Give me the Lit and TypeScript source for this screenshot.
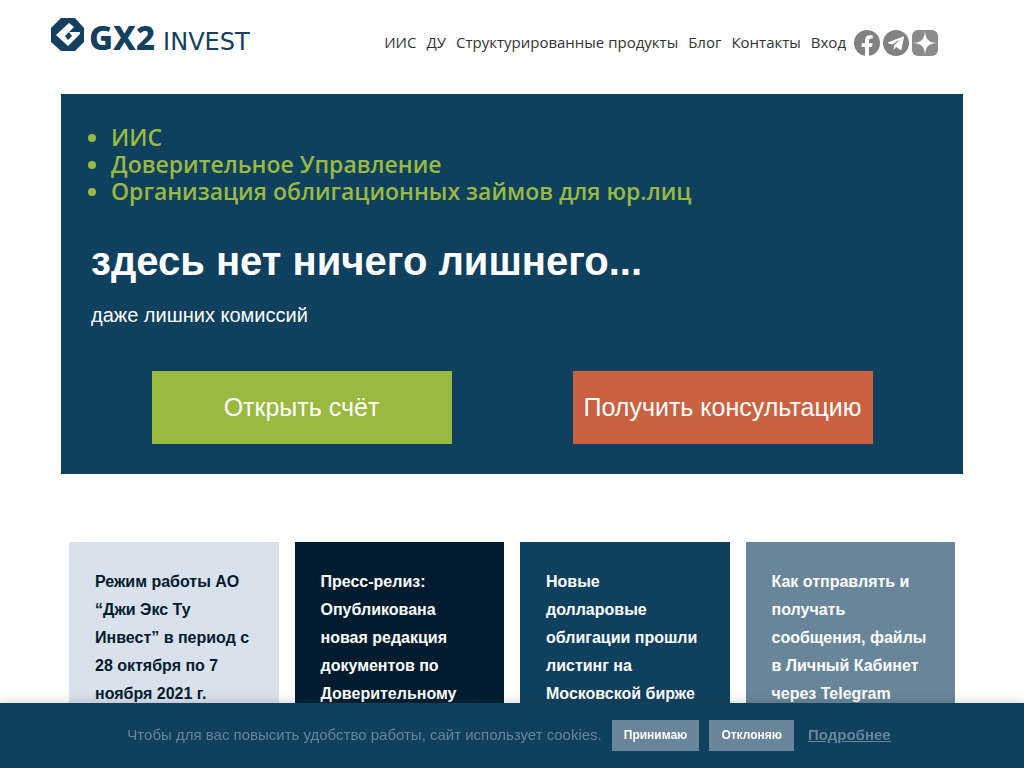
import { LitElement, html, css } from "lit";
import { customElement } from "lit/decorators.js";

const NAV = ["ИИС", "ДУ", "Структурированные продукты", "Блог", "Контакты", "Вход"];

const NEWS = [
  { tone: "light", title: "Режим работы АО “Джи Экс Ту Инвест” в период с 28 октября по 7 ноября 2021 г." },
  { tone: "dark", title: "Пресс-релиз: Опубликована новая редакция документов по Доверительному" },
  { tone: "navy", title: "Новые долларовые облигации прошли листинг на Московской бирже" },
  { tone: "slate", title: "Как отправлять и получать сообщения, файлы в Личный Кабинет через Telegram" },
];

@customElement("app-root")
export class AppRoot extends LitElement {
  static styles = css`
    :host {
      display: block;
      background: #fff;
      font-family: "Liberation Sans", Arial, sans-serif;
      color: #fff;
    }
    * { box-sizing: border-box; }
    a { color: inherit; text-decoration: none; }
    .header {
      display: flex;
      justify-content: space-between;
      align-items: flex-start;
      padding: 18px 86px 0 51px;
      height: 94px;
    }
    .logo { display: flex; color: #14405f; }
    .mark { width: 34px; height: 34px; display: block; }
    .word {
      display: flex;
      align-items: baseline;
      gap: 8px;
      padding-left: 4px;
      line-height: 40px;
    }
    .gx { font: 800 33px/40px "Noto Sans", "Open Sans", sans-serif; }
    .invest { font: 24px/40px "DejaVu Sans", Verdana, sans-serif; }
    .nav {
      display: flex;
      align-items: center;
      gap: 10px;
      padding-top: 12px;
      font: 15px/24px "Open Sans", "Noto Sans", sans-serif;
      color: #333;
      white-space: nowrap;
    }
    .nav > a { padding-bottom: 2px; }
    .social { display: flex; gap: 3px; margin-left: -2px; }
    .social a, .social svg { display: block; width: 26px; height: 26px; }
    .hero {
      margin: 0 61px;
      padding: 30px;
      background: #0f405e;
    }
    .services {
      margin: 0;
      padding-left: 20px;
      font: 600 23px/27px "Open Sans", "Noto Sans", sans-serif;
      color: #9ab941;
    }
    .headline {
      margin: 32px 0 0;
      font-size: 40px;
      line-height: 48px;
    }
    .sub { margin: 18px 0 0; font-size: 20px; line-height: 24px; }
    .actions {
      display: grid;
      grid-template-columns: 1fr 1fr;
      justify-items: center;
      margin-top: 44px;
    }
    .cta {
      width: 300px;
      padding: 22px 0;
      font-size: 25px;
      line-height: 29px;
      text-align: center;
      white-space: nowrap;
    }
    .open { background: #9ab941; }
    .consult { background: #ca6242; }
    .news {
      display: grid;
      grid-template-columns: repeat(4, 1fr);
      gap: 16px;
      margin: 68px 69px 0;
    }
    .card { padding: 26px 26px 80px; }
    .card h3 { margin: 0; font-size: 16px; line-height: 28px; }
    .light { background: #d9e1ec; color: #001c2e; }
    .dark { background: #001c2e; }
    .navy { background: #0f405e; }
    .slate { background: #688599; }
    .cookies {
      position: fixed;
      left: 0;
      right: 0;
      bottom: 0;
      display: flex;
      justify-content: center;
      align-items: center;
      gap: 10px;
      padding: 17px 10px 17px 4px;
      background: #0f405e;
      box-shadow: 0 0 10px rgba(50, 50, 50, 0.25);
      color: #688599;
      font-size: 15px;
      line-height: 29px;
    }
    .cookies span, .cookies a { padding-bottom: 2px; }
    .cookies button {
      border: 0;
      padding: 0 12px;
      background: #688599;
      color: #fff;
      font: bold 12px/31px "Liberation Sans", Arial, sans-serif;
    }
    .more { margin-left: 4px; font-weight: bold; text-decoration: underline; }
  `;

  render() {
    return html`
      <header class="header">
        <a class="logo" href="#" aria-label="GX2 Invest">
          <svg class="mark" viewBox="0 0 34 34">
            <path fill="#14405f" d="M10 0H24L33 10V24L24 33H10L0 24V10Z" />
            <path fill="#fff" d="M18 5L23 9L14 18L17 22L21 18L18 14H29V16L17 28L5 17Z" />
          </svg>
          <span class="word"><span class="gx">GX2</span><span class="invest">INVEST</span></span>
        </a>
        <nav class="nav">
          ${NAV.map((item) => html`<a href="#">${item}</a>`)}
          <div class="social">
            <a href="#" aria-label="Facebook">
              <svg viewBox="0 0 26 26">
                <circle cx="13" cy="13" r="13" fill="#818181" />
                <path fill="#fff" d="M11 26V17H7.700V13.200H11V10.300C11 7 12.900 5.200 15.900 5.200C17.300 5.200 18.700 5.400 18.700 5.400V8.600H17.100C15.500 8.600 15 9.600 15 10.600V13.200H18.600L18 17H15V26Z" />
              </svg>
            </a>
            <a href="#" aria-label="Telegram">
              <svg viewBox="0 0 26 26">
                <circle cx="13" cy="13" r="13" fill="#818181" />
                <path fill="#fff" d="M20 6.500L5.500 12.300C4.700 12.700 4.800 13.200 5.500 13.400L9.200 14.600L17.600 9.300L10.900 15.500L10.600 19.400C11.100 19.400 11.300 19.200 11.600 18.900L13.400 17.100L17.100 19.900C17.800 20.200 18.300 20 18.500 19.200L20.900 7.500C21.100 6.600 20.600 6.200 20 6.500Z" />
              </svg>
            </a>
            <a href="#" aria-label="Дзен">
              <svg viewBox="0 0 26 26">
                <rect width="26" height="26" rx="6" fill="#8b8b8b" />
                <path fill="#fff" d="M13 0C13.300 9.500 16.500 12.700 26 13C16.500 13.300 13.300 16.500 13 26C12.700 16.500 9.500 13.300 0 13C9.500 12.700 12.700 9.500 13 0Z" />
              </svg>
            </a>
          </div>
        </nav>
      </header>
      <main>
        <section class="hero">
          <ul class="services">
            <li>ИИС</li>
            <li>Доверительное Управление</li>
            <li>Организация облигационных займов для юр.лиц</li>
          </ul>
          <h1 class="headline">здесь нет ничего лишнего...</h1>
          <p class="sub">даже лишних комиссий</p>
          <div class="actions">
            <a class="cta open" href="#">Открыть счёт</a>
            <a class="cta consult" href="#">Получить консультацию</a>
          </div>
        </section>
        <section class="news">
          ${NEWS.map((n) => html`<article class="card ${n.tone}"><h3>${n.title}</h3></article>`)}
        </section>
      </main>
      <div class="cookies">
        <span>Чтобы для вас повысить удобство работы, сайт использует cookies.</span>
        <button type="button">Принимаю</button>
        <button type="button">Отклоняю</button>
        <a class="more" href="#">Подробнее</a>
      </div>
    `;
  }
}
